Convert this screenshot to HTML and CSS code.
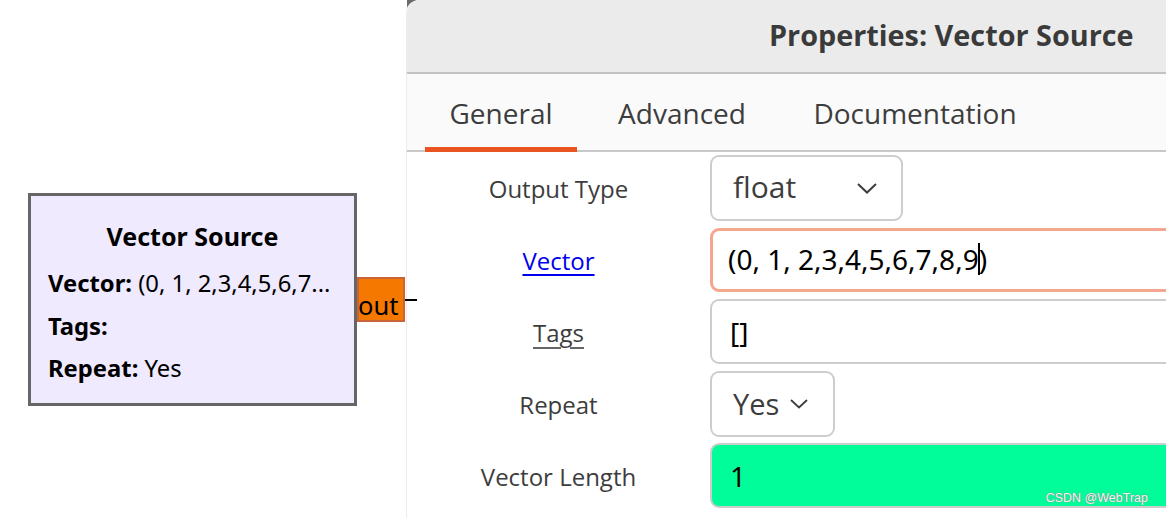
FILE: index.html
```html
<!DOCTYPE html>
<html>
<head>
<meta charset="utf-8">
<link rel="stylesheet" href="styles.css">
</head>
<body>
<div class="canvas">
  <div class="block">
    <div class="block-title">Vector Source</div>
    <div class="block-param"><b>Vector:</b> (0, 1, 2,3,4,5,6,7...</div>
    <div class="block-param"><b>Tags:</b></div>
    <div class="block-param"><b>Repeat:</b> Yes</div>
  </div>
  <div class="port">out</div>
  <div class="wire"></div>
</div>
<div class="dialog">
  <div class="header"><span class="title">Properties: Vector Source</span></div>
  <div class="tabs">
    <div class="tab tab-general active">General</div>
    <div class="tab tab-advanced">Advanced</div>
    <div class="tab tab-doc">Documentation</div>
  </div>
  <div class="form">
    <div class="label">Output Type</div>
    <div class="field">
      <div class="combo combo-type"><span>float</span><svg class="chev" width="20" height="11" viewBox="0 0 20 11"><path d="M1 1 L10 9.5 L19 1" fill="none" stroke="#3d3d3d" stroke-width="2"/></svg></div>
    </div>
    <div class="label"><span class="link">Vector</span></div>
    <div class="field">
      <div class="entry entry-focus"><span>(0, 1, 2,3,4,5,6,7,8,9</span><span class="caret"></span><span>)</span></div>
    </div>
    <div class="label"><span class="ul">Tags</span></div>
    <div class="field">
      <div class="entry"><span>[]</span></div>
    </div>
    <div class="label">Repeat</div>
    <div class="field">
      <div class="combo combo-repeat"><span>Yes</span><svg class="chev" width="18" height="10" viewBox="0 0 18 10"><path d="M1 1 L9 8.5 L17 1" fill="none" stroke="#3d3d3d" stroke-width="1.8"/></svg></div>
    </div>
    <div class="label">Vector Length</div>
    <div class="field">
      <div class="entry entry-green"><span>1</span><span class="watermark">CSDN @WebTrap</span></div>
    </div>
  </div>
</div>
</body>
</html>
```
FILE: styles.css
```css
html, body {
  margin: 0;
  padding: 0;
}
body {
  width: 1166px;
  height: 518px;
  overflow: hidden;
  display: flex;
  background: #ffffff;
  font-family: "Noto Sans", sans-serif;
}

/* ---------- canvas ---------- */
.canvas {
  position: relative;
  width: 407px;
  flex: none;
  background: #ffffff;
}
.block {
  position: absolute;
  left: 28px;
  top: 193px;
  width: 323px;
  height: 207px;
  border: 3px solid #666666;
  background: #efeafd;
  color: #000;
  box-sizing: content-box;
}
.block-title {
  font-weight: 700;
  font-size: 25px;
  text-align: center;
  margin-top: 23px;
  line-height: 34px;
}
.block-param {
  font-size: 23.8px;
  line-height: 42.5px;
  padding-left: 17px;
  white-space: nowrap;
}
.block-title + .block-param { margin-top: 9px; }
.port {
  position: absolute;
  left: 357px;
  top: 277px;
  width: 44px;
  height: 41px;
  background: #f57900;
  border: 2px solid #c9643a;
  font-size: 25.5px;
  line-height: 52px;
  color: #000;
  overflow: hidden;
  text-indent: -1px;
}
.wire {
  position: absolute;
  left: 405px;
  top: 299px;
  width: 12px;
  height: 2px;
  background: #000;
  z-index: 2;
}

/* ---------- dialog ---------- */
.dialog {
  position: relative;
  flex: 1;
  display: flex;
  flex-direction: column;
  background: #ffffff;
  border-top-left-radius: 13px;
  box-shadow: -1px 0 0 #ececec;
  overflow: hidden;
  font-family: "Open Sans", "Noto Sans", sans-serif;
  color: #3d3d3d;
}
.canvas::after {
  content: "";
  position: absolute;
  right: -14px;
  top: 0;
  width: 14px;
  height: 14px;
  background: #6a6a6a;
}
.header {
  flex: none;
  background: #ebebeb;
  border-bottom: 2px solid #c3c3c3;
  display: flex;
  align-items: center;
  padding-left: 362px;
  box-sizing: border-box;
  height: 74px;
}
.title {
  font-weight: 700;
  font-size: 28.8px;
  color: #3a3a3a;
  margin-top: -3px;
  white-space: nowrap;
}
.tabs {
  height: 78px;
  flex: none;
  background: #fafafa;
  border-bottom: 2px solid #c8c8c8;
  box-sizing: border-box;
  display: flex;
  align-items: stretch;
  padding-left: 18px;
}
.tab {
  display: flex;
  align-items: center;
  justify-content: center;
  font-size: 28px;
  color: #3d3d3d;
  white-space: nowrap;
  padding-top: 2px;
  box-sizing: border-box;
}
.tab-general { width: 152px; }
.tab-advanced { width: 178px; margin-left: 16px; }
.tab-doc { width: 256px; margin-left: 16px; }
.tab.active {
  border-bottom: 5px solid #e95420;
  margin-bottom: -2px;
  padding-top: 5px;
}

/* ---------- form ---------- */
.form {
  display: grid;
  grid-template-columns: 303px 1fr;
  grid-auto-rows: 65px;
  row-gap: 7px;
  padding-top: 3px;
}
.label {
  display: flex;
  align-items: center;
  justify-content: center;
  font-size: 24px;
  color: #3d3d3d;
  padding-top: 2px;
}
.link {
  color: #0000ee;
  text-decoration: underline;
  text-underline-offset: 4px;
  text-decoration-thickness: 1.5px;
}
.ul {
  text-decoration: underline;
  text-decoration-color: #666;
  text-underline-offset: 5px;
  text-decoration-thickness: 1.5px;
}
.field {
  display: flex;
  align-items: stretch;
}
.combo {
  box-sizing: border-box;
  border: 2px solid #cdcdcd;
  border-radius: 9px;
  background: #fff;
  display: flex;
  align-items: center;
  font-size: 29px;
  color: #3d3d3d;
  padding-left: 21px;
}
.combo-type { width: 193px; height: 66px; font-size: 30px; }
.combo-type span { margin-top: -4px; }
.combo-type .chev { margin-left: auto; margin-right: 24px; }
.combo-repeat { width: 125px; height: 66px; }
.combo-repeat span { margin-top: -2px; }
.combo-repeat .chev { margin-left: 11px; margin-top: 0; }
.entry {
  position: relative;
  box-sizing: border-box;
  flex: 1;
  margin-right: -30px;
  border: 2px solid #cdcdcd;
  border-radius: 9px;
  background: #fff;
  display: flex;
  align-items: center;
  font-family: "Noto Sans", sans-serif;
  font-size: 28px;
  color: #000;
  padding-left: 18px;
  white-space: nowrap;
}
.entry-focus {
  border: 3px solid #f4a78f;
  padding-left: 15px;
  margin-top: 1px;
}
.entry-focus span { margin-top: -2px; }
.caret {
  display: inline-block;
  width: 2px;
  height: 32px;
  background: #000;
  margin: 0 -1px 0 -1px;
}
.entry-green {
  background: #00fd9a;
}
.watermark {
  position: absolute;
  right: 46px;
  bottom: 1px;
  font-family: "Liberation Sans", sans-serif;
  font-size: 12.5px;
  color: #f4f4f4;
  text-shadow: 0 0 1px #888, 0 0 1px #888;
}
```
